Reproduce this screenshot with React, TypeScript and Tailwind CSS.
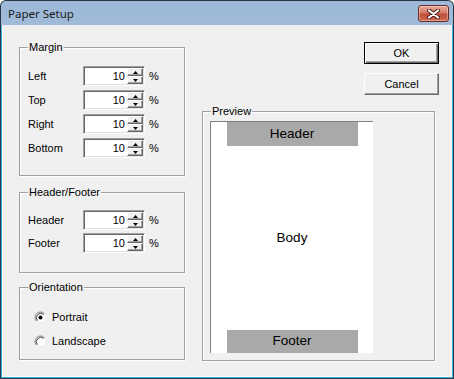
import React from 'react'

const ui = "font-['Liberation_Sans',Arial,sans-serif] text-[11px] text-black"

function Spinner() {
  const btn =
    'flex-1 flex items-center justify-center bg-[#f0f0f0] border border-t-white border-l-white border-r-[#696969] border-b-[#696969] shadow-[inset_-1px_-1px_0_#a0a0a0]'
  return (
    <div className="flex flex-col w-[16px] h-[16px]">
      <div className={btn}>
        <svg width="5" height="3" viewBox="0 0 5 3">
          <path d="M2.5 0 L5 3 L0 3 Z" fill="#000" />
        </svg>
      </div>
      <div className={btn}>
        <svg width="5" height="3" viewBox="0 0 5 3">
          <path d="M0 0 L5 0 L2.5 3 Z" fill="#000" />
        </svg>
      </div>
    </div>
  )
}

function SpinRow({ label, value }: { label: string; value: number }) {
  return (
    <div className="flex items-center h-[20px]">
      <span className="w-[55px]">{label}</span>
      <div className="w-[62px] h-[20px] flex items-center bg-white border border-t-[#a0a0a0] border-l-[#a0a0a0] border-b-white border-r-white shadow-[inset_1px_1px_0_#696969,inset_-1px_-1px_0_#e3e3e3] px-[1px]">
        <span className="flex-1 text-right pr-[2px]">{value}</span>
        <Spinner />
      </div>
      <span className="ml-[4px]">%</span>
    </div>
  )
}

function Group({ title, className, children }: { title: string; className: string; children: React.ReactNode }) {
  return (
    <div className={`relative border border-[#a0a0a0] shadow-[1px_1px_0_#fff,inset_1px_1px_0_#fff] ${className}`}>
      <span className="absolute left-[8px] top-[-8px] bg-[#f0f0f0] px-px leading-[14px]">{title}</span>
      {children}
    </div>
  )
}

function Radio({ label, checked }: { label: string; checked?: boolean }) {
  return (
    <div className="flex items-center h-[16px] gap-[5px]">
      <svg width="13" height="13" viewBox="0 0 13 13">
        <circle cx="6.5" cy="6.5" r="5.5" fill="#fff" />
        <path d="M2.6 10.4 A5.5 5.5 0 0 1 10.4 2.6" fill="none" stroke="#808080" strokeWidth="1" />
        <path d="M3.4 9.6 A4.4 4.4 0 0 1 9.6 3.4" fill="none" stroke="#404040" strokeWidth="1" />
        <path d="M10.4 2.6 A5.5 5.5 0 0 1 2.6 10.4" fill="none" stroke="#e6e6e6" strokeWidth="1" />
        {checked && <circle cx="6.5" cy="6.5" r="2" fill="#000" />}
      </svg>
      <span>{label}</span>
    </div>
  )
}

function Button({ label, isDefault }: { label: string; isDefault?: boolean }) {
  return (
    <div
      className={`w-[75px] h-[22px] flex items-center justify-center bg-[#f0f0f0] ${
        isDefault
          ? 'border border-black shadow-[inset_1px_1px_0_#fff,inset_-1px_-1px_0_#696969,inset_-2px_-2px_0_#a0a0a0]'
          : 'border border-t-white border-l-white border-r-[#696969] border-b-[#696969] shadow-[inset_-1px_-1px_0_#a0a0a0]'
      }`}
    >
      {label}
    </div>
  )
}

export default function App() {
  return (
    <div className="w-[454px] h-[379px] bg-[#263546] p-px rounded-t-[6px]">
      <div className="h-full flex flex-col rounded-t-[5px] bg-[linear-gradient(#9eb9d7,#bbd2ea)]">
        {/* Title bar */}
        <div className="h-[24px] flex items-start justify-between pl-[7px] pr-[4px]">
          <span className="mt-[5px] font-['Noto_Sans',sans-serif] text-[11.5px] leading-[16px] text-[#1b1b1b]">
            Paper Setup
          </span>
          <div className="mt-[4px] w-[31px] h-[17px] flex items-center justify-center rounded-[3px] border border-[#6b2a22] bg-[linear-gradient(#e9ab9b,#d47a66_45%,#c24d37_55%,#cf6b55)] shadow-[inset_0_0_0_1px_rgba(255,255,255,0.35)]">
            <svg width="13" height="10" viewBox="0 0 13 10">
              <path d="M2 1.5 L11 8.5 M11 1.5 L2 8.5" stroke="#4a1c17" strokeWidth="4" strokeLinecap="round" />
              <path d="M2 1.5 L11 8.5 M11 1.5 L2 8.5" stroke="#fff" strokeWidth="2.2" strokeLinecap="round" />
            </svg>
          </div>
        </div>

        {/* Frame + client area */}
        <div className="flex-1 bg-[#42ade3] px-px pb-px">
          <div className={`h-full bg-[#f0f0f0] border-l border-r border-b border-[#f8fbfd] flex pl-[16px] pt-[17px] pr-[12px] ${ui}`}>
            {/* Left column */}
            <div className="w-[166px] mt-[5px] flex flex-col">
              <Group title="Margin" className="h-[129px] pt-[18px] pl-[8px] flex flex-col gap-[4px]">
                <SpinRow label="Left" value={10} />
                <SpinRow label="Top" value={10} />
                <SpinRow label="Right" value={10} />
                <SpinRow label="Bottom" value={10} />
              </Group>
              <Group title="Header/Footer" className="mt-[16px] h-[81px] pt-[17px] pl-[8px] flex flex-col gap-[3px]">
                <SpinRow label="Header" value={10} />
                <SpinRow label="Footer" value={10} />
              </Group>
              <Group title="Orientation" className="mt-[14px] h-[73px] pt-[21px] pl-[14px] flex flex-col gap-[8px]">
                <Radio label="Portrait" checked />
                <Radio label="Landscape" />
              </Group>
            </div>

            {/* Right column */}
            <div className="flex-1 flex flex-col ml-[17px]">
              <div className="flex flex-col items-end gap-[9px]">
                <Button label="OK" isDefault />
                <Button label="Cancel" />
              </div>
              <Group title="Preview" className="mt-[16px] mr-[4px] h-[250px] pt-[9px] pl-[7px]">
                <div className="w-[163px] h-[232px] bg-white border-l border-t border-[#808080] flex flex-col items-center justify-between font-['Liberation_Sans',Arial,sans-serif] text-[13.5px]">
                  <div className="w-[131px] h-[24px] bg-[#a9a9a9] flex items-center justify-center">Header</div>
                  <div>Body</div>
                  <div className="w-[131px] h-[23px] bg-[#a9a9a9] flex items-center justify-center">Footer</div>
                </div>
              </Group>
            </div>
          </div>
        </div>
      </div>
    </div>
  )
}
